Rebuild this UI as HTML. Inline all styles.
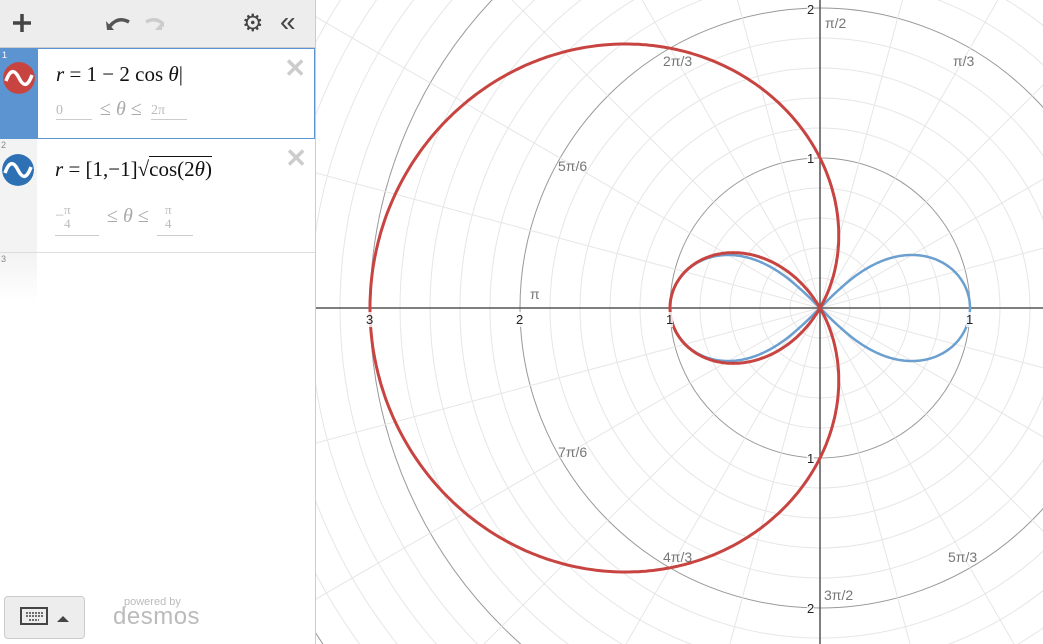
<!DOCTYPE html>
<html style="overflow:hidden;height:644px"><head><meta charset="utf-8"><style>
body{margin:0;width:1043px;height:644px;overflow:hidden;font-family:"Liberation Sans",sans-serif;background:#fff;position:relative}
#side{position:absolute;left:0;top:0;width:315px;height:644px;background:#fff;border-right:1px solid #ccc;z-index:2;overflow:hidden}
#top{height:47px;background:#ededed;border-bottom:1px solid #ccc;position:relative}
.row{position:absolute;left:0;width:315px;border-bottom:1px solid #ddd;box-sizing:border-box}
.gut{position:absolute;left:0;top:0;bottom:0;width:37px;background:#f3f3f3}
.num{position:absolute;left:1px;top:1px;font-size:9px;color:#888}
.ic{position:absolute;left:2px;width:32px;height:32px;border-radius:50%}
.m{font-family:"Liberation Serif",serif;position:absolute;color:#111;white-space:nowrap}
.x{position:absolute;right:8px;color:#ccc;font-size:26px;font-weight:bold}
.lim{position:absolute;color:#bbb;font-family:"Liberation Serif",serif}
.gl{position:absolute;font-size:14px;color:#777;font-family:"Liberation Sans",sans-serif}
.an{position:absolute;font-size:13px;color:#222;background:rgba(255,255,255,.8)}
</style></head><body>
<div id="side">
 <div id="top">
  <svg style="position:absolute;left:11px;top:12px" width="22" height="22"><path d="M11 2V20M2 11H20" stroke="#444" stroke-width="3.5"/></svg>
  <svg style="position:absolute;left:104px;top:12px" width="60" height="22"><path d="M6 14 Q14 4 25 10" fill="none" stroke="#555" stroke-width="3.5"/><path d="M2 9 L10 18 L3 18Z" fill="#555"/><path d="M63 14 Q55 4 44 10" transform="translate(-2,0)" fill="none" stroke="#ccc" stroke-width="3.5"/><path d="M59 9 L51 18 L58 18Z" fill="#ccc"/></svg>
  <div style="position:absolute;left:242px;top:9px;font-size:24px;color:#444">⚙</div>
  <div style="position:absolute;left:280px;top:6px;font-size:28px;color:#444">«</div>
 </div>
 <div class="row" style="top:48px;height:91px;border:1px solid #5b94d1">
  <div class="gut" style="background:#5b94d1"></div><div class="num" style="color:#fff">1</div>
  <svg class="ic" style="top:13px" viewBox="0 0 32 32"><circle cx="16" cy="16" r="16" fill="#c74440"/><path d="M3 19 Q9 2 16 16 Q23 30 29 13" fill="none" stroke="#fff" stroke-width="3.5"/></svg>
  <div class="m" style="left:55px;top:13px;font-size:21px"><i>r</i> = 1 − 2 cos <i>θ</i>|</div>
  <div class="x" style="top:4px">✕</div>
  <div class="lim" style="left:55px;top:54px;font-size:14px;width:36px;border-bottom:1px solid #ccc">0</div>
  <div class="lim" style="left:99px;top:49px;font-size:20px;color:#aaa">≤ <i>θ</i> ≤</div>
  <div class="lim" style="left:150px;top:54px;font-size:14px;width:36px;border-bottom:1px solid #ccc">2π</div>
 </div>
 <div class="row" style="top:139px;height:114px">
  <div class="gut"></div><div class="num">2</div>
  <svg class="ic" style="top:15px" viewBox="0 0 32 32"><circle cx="16" cy="16" r="16" fill="#2d70b3"/><path d="M3 19 Q9 2 16 16 Q23 30 29 13" fill="none" stroke="#fff" stroke-width="3.5"/></svg>
  <div class="m" style="left:55px;top:18px;font-size:21px"><i>r</i> = [1,−1]√<span style="border-top:1px solid #111">cos(2<i>θ</i>)</span></div>
  <div class="x" style="top:4px">✕</div>
  <div class="lim" style="left:55px;top:64px;font-size:16px;width:44px;height:32px;border-bottom:1px solid #ccc">−<span style="display:inline-block;text-align:center;font-size:13px;vertical-align:middle;line-height:14px">π<br>4</span></div>
  <div class="lim" style="left:107px;top:66px;font-size:20px;color:#aaa">≤ <i>θ</i> ≤</div>
  <div class="lim" style="left:157px;top:64px;font-size:13px;width:36px;height:32px;border-bottom:1px solid #ccc;line-height:14px"><span style="display:inline-block;margin-left:8px;text-align:center">π<br>4</span></div>
 </div>
 <div class="row" style="top:253px;height:50px;border:none"><div class="gut" style="background:linear-gradient(#f3f3f3,#fff)"></div><div class="num">3</div></div>
 <div style="position:absolute;left:4px;top:596px;width:79px;height:41px;border:1px solid #ccc;border-radius:4px;background:#ededed">
  <svg style="position:absolute;left:15px;top:10px" width="52" height="20"><rect x="1" y="1" width="26" height="16" fill="none" stroke="#444" stroke-width="2"/><path d="M6 6h18M6 9h18M9 13h10" stroke="#444" stroke-width="1.5" stroke-dasharray="2 1"/><path d="M37 15 L43 9 L49 15Z" fill="#444"/></svg>
 </div>
 <div style="position:absolute;left:124px;top:596px;font-size:11px;color:#bbb">powered by</div>
 <div style="position:absolute;left:113px;top:603px;font-size:24px;color:#bbb;letter-spacing:.5px">desmos</div>
</div>
<svg id="g" style="position:absolute;left:0;top:0" width="1043" height="644"></svg>
<div class="gl" style="left:825px;top:15px">π/2</div>
<div class="gl" style="left:953px;top:53px">π/3</div>
<div class="gl" style="left:663px;top:53px">2π/3</div>
<div class="gl" style="left:558px;top:158px">5π/6</div>
<div class="gl" style="left:530px;top:286px">π</div>
<div class="gl" style="left:558px;top:444px">7π/6</div>
<div class="gl" style="left:663px;top:549px">4π/3</div>
<div class="gl" style="left:824px;top:587px">3π/2</div>
<div class="gl" style="left:948px;top:549px">5π/3</div>
<div class="an" style="left:807px;top:2px">2</div>
<div class="an" style="left:807px;top:151px">1</div>
<div class="an" style="left:807px;top:451px">1</div>
<div class="an" style="left:807px;top:601px">2</div>
<div class="an" style="left:366px;top:312px">3</div>
<div class="an" style="left:516px;top:312px">2</div>
<div class="an" style="left:666px;top:312px">1</div>
<div class="an" style="left:966px;top:312px">1</div>
<script>
var g=document.getElementById('g'),s='',ox=820,oy=308,u=150;
for(var k=1;k<=30;k++){var r=k*30;var maj=k%5==0;s+='<circle cx="'+ox+'" cy="'+oy+'" r="'+r+'" fill="none" stroke="'+(maj?'#999':'#e6e6e6')+'" stroke-width="1"/>';}
for(var a=0;a<24;a++){if(a%6==0)continue;var t=a*Math.PI/12;s+='<line x1="'+ox+'" y1="'+oy+'" x2="'+(ox+1200*Math.cos(t))+'" y2="'+(oy-1200*Math.sin(t))+'" stroke="#e6e6e6"/>';}
s+='<line x1="316" y1="308" x2="1043" y2="308" stroke="#555" stroke-width="1.5"/><line x1="820" y1="0" x2="820" y2="644" stroke="#555" stroke-width="1.5"/>';
var p='';for(var i=0;i<=720;i++){var t=i/720*2*Math.PI,r=1-2*Math.cos(t);p+=(i?'L':'M')+(ox+u*r*Math.cos(t)).toFixed(1)+' '+(oy-u*r*Math.sin(t)).toFixed(1);}
var q='';[1,-1].forEach(function(sg){for(var i=0;i<=300;i++){var t=-Math.PI/4+i/300*Math.PI/2,r=sg*Math.sqrt(Math.max(0,Math.cos(2*t)));q+=(i?'L':'M')+(ox+u*r*Math.cos(t)).toFixed(1)+' '+(oy-u*r*Math.sin(t)).toFixed(1);}});
s+='<path d="'+q+'" fill="none" stroke="#6a9fd0" stroke-width="2.5"/><path d="'+p+'" fill="none" stroke="#c74440" stroke-width="3"/>';
g.innerHTML=s;
</script>
</body></html>
